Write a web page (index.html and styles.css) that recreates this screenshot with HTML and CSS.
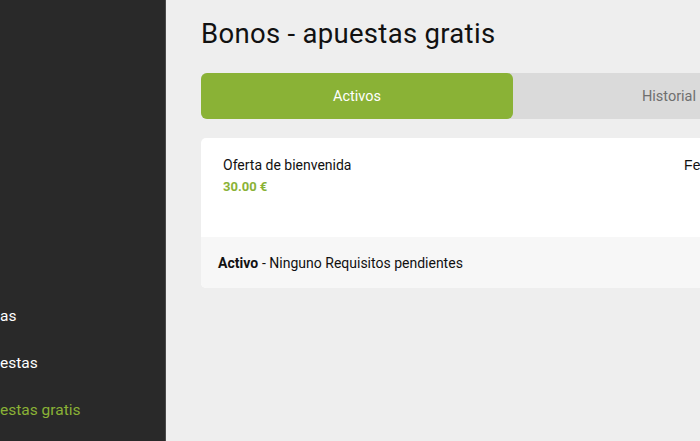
FILE: index.html
```html
<!DOCTYPE html>
<html lang="es">
<head>
    <meta charset="UTF-8">
    <meta name="viewport" content="width=device-width, initial-scale=1.0">
    <title>Bonos - apuestas gratis</title>
    <link rel="stylesheet" href="styles.css">
</head>
<body>
    <div class="layout">
        <nav class="sidebar">
            <a class="nav-item" href="#">as</a>
            <a class="nav-item" href="#">estas</a>
            <a class="nav-item active" href="#">estas gratis</a>
        </nav>
        <main class="content">
            <h1 class="title">Bonos - apuestas gratis</h1>
            <div class="tabs">
                <button class="tab active">Activos</button>
                <button class="tab">Historial</button>
            </div>
            <div class="bonus-card">
                <div class="bonus-body">
                    <div class="bonus-info">
                        <div class="bonus-name">Oferta de bienvenida</div>
                        <div class="bonus-amount">30.00 €</div>
                    </div>
                    <div class="bonus-date">Fecha</div>
                </div>
                <div class="bonus-footer">
                    <strong>Activo</strong> - Ninguno Requisitos pendientes
                </div>
            </div>
        </main>
    </div>
</body>
</html>
```

FILE: styles.css
```css
body {
    margin: 0;
    padding: 0;
    font-family: Roboto, "Liberation Sans", sans-serif;
    background-color: #eeeeee;
    color: #111;
    overflow: hidden;
}
.layout {
    display: flex;
    height: 441px;
    width: 700px;
    overflow: hidden;
}
.sidebar {
    flex: 0 0 166px;
    background-color: #292929;
    border-right: 1px solid #4a4a4a;
    display: flex;
    flex-direction: column;
    padding-top: 306px;
    gap: 26px;
    box-sizing: border-box;
}
.nav-item {
    color: #fff;
    text-decoration: none;
    font-size: 15.5px;
    line-height: 21px;
}
.nav-item.active {
    color: #8ab236;
}
.content {
    flex: 0 0 auto;
    padding: 0 0 0 35px;
}
.title {
    margin: 15px 0 0;
    font-size: 27.5px;
    font-weight: 400;
    line-height: 38px;
    letter-spacing: 0.3px;
}
.tabs {
    display: flex;
    margin-top: 20px;
    width: 624px;
    background-color: #dadada;
    border-radius: 6px;
}
.tab {
    flex: 1;
    height: 46px;
    border: none;
    background: none;
    font-family: inherit;
    font-size: 14.5px;
    color: #6f6f6f;
    border-radius: 6px;
    cursor: pointer;
}
.tab.active {
    background-color: #8ab236;
    color: #fff;
}
.bonus-card {
    margin-top: 19px;
    width: 624px;
    background-color: #fff;
    border-radius: 5px;
    overflow: hidden;
}
.bonus-body {
    display: flex;
    justify-content: space-between;
    height: 99px;
    padding: 18px 22px 0;
    box-sizing: border-box;
}
.bonus-name {
    font-size: 14px;
    line-height: 18px;
}
.bonus-amount {
    margin-top: 5px;
    font-size: 13px;
    font-weight: 700;
    color: #8ab236;
}
.bonus-date {
    font-family: "Liberation Sans", Arial, sans-serif;
    font-size: 14px;
    line-height: 18px;
    margin-right: 80px;
}
.bonus-footer {
    height: 50px;
    background-color: #f7f7f7;
    padding: 1px 17px 0;
    display: flex;
    align-items: center;
    gap: 4px;
    font-size: 14px;
}
```
